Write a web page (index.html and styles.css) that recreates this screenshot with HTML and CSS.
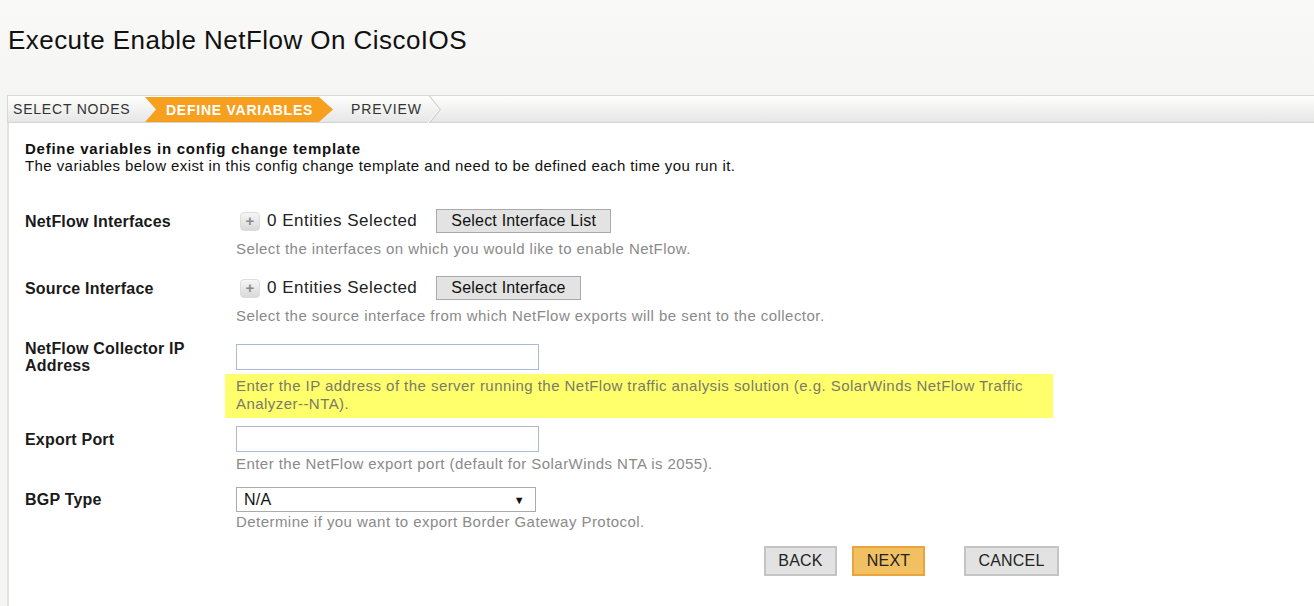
FILE: index.html
```html
<!DOCTYPE html>
<html>
<head>
<meta charset="utf-8">
<title>Execute Enable NetFlow On CiscoIOS</title>
<link rel="stylesheet" href="styles.css">
</head>
<body>
<div class="page">
  <h1 class="title">Execute Enable NetFlow On CiscoIOS</h1>
  <div class="wizard">
    <div class="step step-first">SELECT NODES</div>
    <div class="step step-active">DEFINE VARIABLES</div>
    <div class="step step-last">PREVIEW
      <svg class="chev" width="14" height="27" viewBox="0 0 14 27"><polyline points="1,0 12,13.5 1,27" fill="none" stroke="#cfcfcf" stroke-width="1.5"/><polyline points="0,0 11,13.5 0,27" fill="none" stroke="#ffffff" stroke-width="1"/></svg>
    </div>
  </div>
  <div class="panel">
    <div class="intro">
      <div class="intro-title">Define variables in config change template</div>
      <div class="intro-text">The variables below exist in this config change template and need to be defined each time you run it.</div>
    </div>
    <div class="form">
      <div class="field field-entity">
        <div class="label">NetFlow Interfaces</div>
        <div class="control">
          <span class="plus">+</span>
          <span class="entities">0 Entities Selected</span>
          <span class="btn-select">Select Interface List</span>
        </div>
        <div class="help">Select the interfaces on which you would like to enable NetFlow.</div>
      </div>
      <div class="field field-entity">
        <div class="label">Source Interface</div>
        <div class="control">
          <span class="plus">+</span>
          <span class="entities">0 Entities Selected</span>
          <span class="btn-select">Select Interface</span>
        </div>
        <div class="help">Select the source interface from which NetFlow exports will be sent to the collector.</div>
      </div>
      <div class="field">
        <div class="label">NetFlow Collector IP<br>Address</div>
        <div class="control"><span class="input"></span></div>
        <div class="help help-mark">Enter the IP address of the server running the NetFlow traffic analysis solution (e.g. SolarWinds NetFlow Traffic Analyzer--NTA).</div>
      </div>
      <div class="field">
        <div class="label">Export Port</div>
        <div class="control"><span class="input"></span></div>
        <div class="help">Enter the NetFlow export port (default for SolarWinds NTA is 2055).</div>
      </div>
      <div class="field field-select">
        <div class="label">BGP Type</div>
        <div class="control"><span class="select"><span>N/A</span><span class="arrow">▼</span></span></div>
        <div class="help">Determine if you want to export Border Gateway Protocol.</div>
      </div>
      <div class="actions">
        <span class="btn">BACK</span>
        <span class="btn btn-primary">NEXT</span>
        <span class="btn btn-cancel">CANCEL</span>
      </div>
    </div>
  </div>
</div>
</body>
</html>
```
FILE: styles.css
```css
html, body {
  margin: 0;
  padding: 0;
  height: 100%;
}
body {
  background: linear-gradient(#f9f9f8, #f5f5f4 90px);
  font-family: "Liberation Sans", Arial, sans-serif;
  color: #111;
  overflow: hidden;
}
.page {
  padding: 0 0 0 7px;
  height: 100%;
  display: flex;
  flex-direction: column;
}
.title {
  flex-shrink: 0;
  margin: 0;
  padding: 26px 0 0 1px;
  height: 95px;
  box-sizing: border-box;
  font-size: 26px;
  font-weight: normal;
  line-height: 28px;
  letter-spacing: 0.45px;
  color: #111;
}
.wizard {
  flex-shrink: 0;
  display: flex;
  align-items: stretch;
  height: 26px;
  border-top: 1px solid #d9d9d9;
  border-bottom: 1px solid #d4d4d4;
  border-left: 1px solid #d9d9d9;
  background: linear-gradient(#fefefd, #e6e6e6);
}
.step {
  display: flex;
  align-items: center;
  font-size: 14px;
  color: #333;
  letter-spacing: 0.8px;
}
.step-first {
  padding-left: 5px;
  width: 132px;
}
.step-active {
  width: 188px;
  padding-left: 21px;
  box-sizing: border-box;
  font-weight: bold;
  color: #fff;
  letter-spacing: 0.75px;
  margin: 1px 0 0;
  height: 25px;
  background: #f7a020;
  clip-path: polygon(0 0, calc(100% - 14px) 0, 100% 50%, calc(100% - 14px) 100%, 0 100%, 11px 50%);
}
.step-last {
  padding-left: 18px;
  letter-spacing: 0.9px;
}
.chev {
  margin-left: 6px;
  display: block;
}
.panel {
  flex: 1;
  background: #fff;
  border-left: 2px solid #e3e3e3;
  padding: 0 0 0 16px;
}
.intro {
  padding-top: 17px;
  font-size: 15px;
  line-height: 17px;
  color: #111;
  letter-spacing: 0.42px;
}
.intro-title {
  font-weight: bold;
  letter-spacing: 0.75px;
}
.form {
  width: 1034px;
  padding-top: 32px;
  display: flex;
  flex-direction: column;
  gap: 16px;
}
.field {
  display: grid;
  grid-template-columns: 211px 1fr;
  align-items: center;
}
.label {
  grid-column: 1;
  grid-row: 1;
  font-size: 16px;
  font-weight: bold;
  line-height: 17px;
  letter-spacing: 0.2px;
  color: #1a1a1a;
}
.control {
  grid-column: 2;
  grid-row: 1;
  display: flex;
  align-items: center;
}
.field-entity .control {
  height: 30px;
}
.help {
  grid-column: 2;
  grid-row: 2;
  font-size: 15px;
  line-height: 17px;
  letter-spacing: 0.45px;
  color: #8a8a8a;
  margin-top: 3px;
}
.field-entity .help {
  margin-top: 4px;
}
.help-mark {
  margin: 0 6px -8px -11px;
  padding: 3px 20px 5px 11px;
  background: #ffff6b;
  color: #7a7a6a;
  line-height: 18px;
}
.field-select {
  margin-top: -1px;
}
.field-select .help {
  margin-top: 1px;
}
.plus {
  width: 20px;
  height: 19px;
  margin-left: 4px;
  border-radius: 4px;
  background: linear-gradient(#f6f6f6, #d9d9d9);
  border: 1px solid #dcdcdc;
  box-sizing: border-box;
  color: #8a8a8a;
  font-weight: bold;
  font-size: 15px;
  line-height: 16px;
  text-align: center;
}
.entities {
  margin-left: 7px;
  font-size: 17px;
  letter-spacing: 0.5px;
  color: #222;
}
.btn-select {
  margin-left: 19px;
  height: 24px;
  padding: 0 14px;
  box-sizing: border-box;
  border: 1px solid #a9a9a9;
  background: #e3e3e3;
  font-size: 16px;
  line-height: 21px;
  letter-spacing: 0.2px;
  color: #111;
}
.input {
  display: block;
  width: 303px;
  height: 26px;
  box-sizing: border-box;
  border: 1px solid #a9bad3;
  background: #fff;
}
.select {
  display: flex;
  align-items: center;
  justify-content: space-between;
  width: 300px;
  height: 25px;
  box-sizing: border-box;
  border: 1px solid #ababab;
  padding: 0 10px 0 7px;
  font-size: 16px;
  letter-spacing: 0.3px;
  color: #111;
  background: #fff;
}
.arrow {
  font-size: 11px;
  color: #111;
}
.actions {
  display: flex;
  justify-content: flex-end;
  gap: 15px;
}
.btn {
  width: 73px;
  height: 30px;
  box-sizing: border-box;
  border: 2px solid #c4c4c4;
  background: #e2e2e2;
  font-size: 16px;
  line-height: 26px;
  letter-spacing: 0.2px;
  text-align: center;
  color: #222;
}
.btn-primary {
  border-color: #eaa43c;
  background: #f1c063;
}
.btn-cancel {
  width: 95px;
  margin-left: 24px;
}
```
